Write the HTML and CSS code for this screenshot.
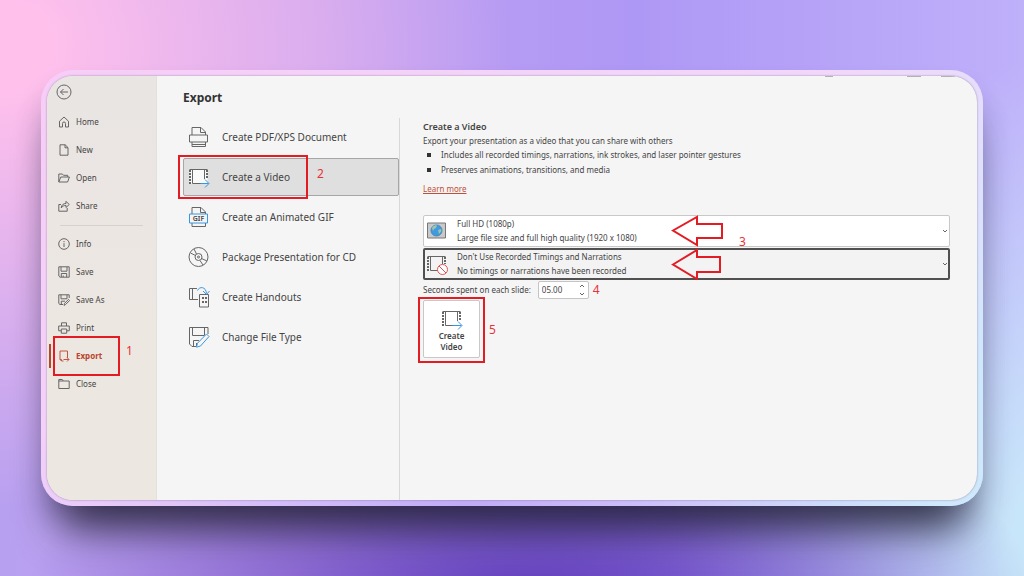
FILE: index.html
```html
<!DOCTYPE html>
<html lang="en">
<head>
  <meta charset="UTF-8" />
  <meta name="viewport" content="width=device-width, initial-scale=1" />
  <title>Export</title>
  <link rel="stylesheet" href="styles.css">
</head>
<body>
  <div class="frame">
    <div class="window">
      <aside class="sidebar">
        <button class="back" aria-label="Back">
          <svg viewBox="0 0 16 16"><circle cx="8" cy="8" r="7"/><path d="M12 8H4.500M7.500 5L4.500 8l3 3"/></svg>
        </button>
        <nav class="menu">
          <a href="#"><svg viewBox="0 0 12 12"><path d="M1.500 5.200L6 1l4.500 4.200V11H7.500V7.500a1.500 1.500 0 0 0-3 0V11h-3z"/></svg>Home</a>
          <a href="#"><svg viewBox="0 0 12 12"><path d="M2 .8h5.200L10 3.600v7.600H2zM7 .8v3h3"/></svg>New</a>
          <a href="#"><svg viewBox="0 0 12 12"><path d="M.8 10V2h3.500l1.200 1.300h4.200V5M.8 10L2.800 5h8.600L9.600 10z"/></svg>Open</a>
          <a href="#"><svg viewBox="0 0 12 12"><path d="M3 4.500H.8v6.700h8.400V8M3.200 8c.2-3 2-4.500 4.800-4.500V1.300l3.200 3.200L8 7.500V5.500C6 5.500 4.500 6 3.200 8z"/></svg>Share</a>
          <hr>
          <a href="#"><svg viewBox="0 0 12 12"><circle cx="6" cy="6" r="5.300"/><path d="M6 5.200V9M6 3v1.200"/></svg>Info</a>
          <a href="#"><svg viewBox="0 0 12 12"><path d="M.8.800h10.400v10.400H2L.8 10zM3 .8v4.400h6V.8M3.300 11V7.500h5.400V11M5.200 9.500V11"/></svg>Save</a>
          <a href="#"><svg viewBox="0 0 12 12"><path d="M5 10.500H2L.8 9.500V.800h10.400V4M3 .8v4h6V.8M3.300 10.300V7.200H7M6 11.400l.5-2 4-4 1.100 1.100-4 4z"/></svg>Save As</a>
          <a href="#"><svg viewBox="0 0 12 12"><path d="M3.500 4V.8h5V4M3 8.800H.7V4h10.600v4.800H9M3.300 7h5.400v4.200H3.300z"/></svg>Print</a>
          <a href="#" class="active">
            <svg viewBox="0 0 12 12"><path d="M5.500 11H3.500L2 9.500V1h7.500v7M3.500 11V9.500H2M5.500 9.500h5.500M9 7.500l2 2-2 2"/></svg>Export
            <span class="mark mark-export"></span>
            <span class="step step-1">1</span>
          </a>
          <a href="#"><svg viewBox="0 0 12 12"><path d="M.8 10.500V1.500h3.500L5.300 3h5.900v7.500zM.8 3h4.500"/></svg>Close</a>
        </nav>
      </aside>

      <main class="content">
        <div class="caption"><i></i><i></i><i></i></div>
        <h1>Export</h1>
        <div class="columns">
          <div class="types">
            <button class="type">
              <svg viewBox="0 0 22 22"><path d="M4 9V1.500h9L17.500 6v3M12.500 1.500v5h5M1.500 9h18v7h-18zM4 16v4.500h13.500V16M4 18.500h13.500"/></svg>
              Create PDF/XPS Document
            </button>
            <button class="type selected">
              <svg viewBox="0 0 22 22"><path class="white" d="M1.500 3.500h18v14h-18z"/><path d="M13 17.500H4.500v-14h12V13M1.500 3.500h18"/><path class="dots" d="M2 4v14M19 4v9"/><path class="blue" d="M12.500 17.500h8M17 13.500l4 4-4 4"/></svg>
              Create a Video
              <span class="mark mark-video"></span>
              <span class="step step-2">2</span>
            </button>
            <button class="type">
              <svg viewBox="0 0 22 22"><path d="M4 8V1.500h9L17.500 6v2M12.500 1.500v5h5M4 17v3.500h13.500V17"/><path class="blue" d="M1.500 8h18v9h-18z"/><text x="10.500" y="15">GIF</text></svg>
              Create an Animated GIF
            </button>
            <button class="type">
              <svg viewBox="0 0 22 22"><circle cx="10.500" cy="11" r="9.500"/><circle cx="10.500" cy="11" r="3.500"/><circle cx="10.500" cy="11" r="1"/><path d="M2.500 7l5 2.500M6 3l2.500 5M13.500 12.500l5.500 2.500M12 14.500l3 4.500"/></svg>
              Package Presentation for CD
            </button>
            <button class="type">
              <svg viewBox="0 0 22 22"><path d="M10 13.500H1.500V2.500H9M4.500 2.500v11M11.500 8.500h9v12.500h-9z"/><path class="dots" d="M14 12h5M14 16h5"/><path class="blue" d="M9.500 4.500c2-4.500 8.500-4 9 3M15 5l3.500 3.500L21.500 5"/></svg>
              Create Handouts
            </button>
            <button class="type">
              <svg viewBox="0 0 22 22"><path d="M8 20.500H4L1.500 18V1.500h18.500V8M4.500 1.500v8h12v-8M5.500 20v-5.500H11M8.500 17v3"/><path class="blue pencil" d="M8.500 21.200l1-4L18.500 8l2.500 2.500-8.500 9.500z"/></svg>
              Change File Type
            </button>
          </div>

          <section class="details">
            <h2>Create a Video</h2>
            <p>Export your presentation as a video that you can share with others</p>
            <ul>
              <li>Includes all recorded timings, narrations, ink strokes, and laser pointer gestures</li>
              <li>Preserves animations, transitions, and media</li>
            </ul>
            <a class="learn" href="#">Learn more</a>

            <div class="combos">
              <div class="combo">
                <select id="quality" aria-label="Video quality"><option>Full HD (1080p)</option></select>
                <svg class="combo-icon" viewBox="0 0 22 22"><path class="bezel" d="M1.500 3h18v15h-18z"/><circle class="globe" cx="10.500" cy="10.500" r="5.500"/><path class="land" d="M6 8c1-2 3-3 5-2.500L10 8l-2 1-1 2zM12 10l3-1 .5 2-2.500 3z"/></svg>
                <label for="quality">Large file size and full high quality (1920 x 1080)</label>
                <svg class="chevron" viewBox="0 0 6 6"><path d="M1 2l2 2 2-2"/></svg>
                <svg class="arrow" viewBox="0 0 52 32"><path d="M2 15.500L26 2v7h25v14H26v7z"/></svg>
              </div>
              <div class="combo focused">
                <select id="timings" aria-label="Timings and narrations"><option>Don't Use Recorded Timings and Narrations</option></select>
                <svg class="combo-icon" viewBox="0 0 22 22"><path d="M12 17.500H4.500v-14h12V11M1.500 3.500h18"/><path class="dots" d="M2 4v14M19 4v7"/><circle class="no" cx="16.500" cy="16.500" r="5"/><path class="no" d="M13 13l7 7"/></svg>
                <label for="timings">No timings or narrations have been recorded</label>
                <svg class="chevron" viewBox="0 0 6 6"><path d="M1 2l2 2 2-2"/></svg>
                <svg class="arrow" viewBox="0 0 52 32"><path d="M2 16.500L26 2v7h23v15H26v7z"/></svg>
              </div>
              <span class="step step-3">3</span>
            </div>

            <div class="seconds">
              <label for="secs">Seconds spent on each slide:</label>
              <span class="spinner">
                <input id="secs" type="text" value="05.00">
                <svg viewBox="0 0 6 14"><path d="M1 4l2-2 2 2M1 10l2 2 2-2"/></svg>
              </span>
              <span class="step">4</span>
            </div>

            <button class="create">
              <svg viewBox="0 0 22 22"><path d="M12 17.500H4.500v-14h12V13M1.500 3.500h18"/><path class="dots" d="M2 4v14M19 4v9"/><path class="blue" d="M11.500 17.500h9M17 13.500l4 4-4 4"/></svg>
              <span>Create<br>Video</span>
              <span class="mark mark-create"></span>
              <span class="step step-5">5</span>
            </button>
          </section>
        </div>
      </main>
    </div>
  </div>
</body>
</html>
```
FILE: styles.css
```css
* {
  box-sizing: border-box;
}

body {
  margin: 0;
  min-height: 100vh;
  padding: 70px 41px;
  display: flex;
  font-family: 'Noto Sans', 'Open Sans', sans-serif;
  font-size: 8px;
  line-height: 14px;
  color: #444;
  background:
    radial-gradient(ellipse 50% 45% at 52% 108%, #5a35b8, rgba(90, 53, 184, 0)),
    radial-gradient(ellipse 40% 90% at 106% 100%, #c8e6fa 20%, rgba(200, 230, 250, 0)),
    radial-gradient(ellipse 50% 80% at 0% 8%, #ffc0ec 10%, rgba(255, 192, 236, 0)),
    linear-gradient(to right, #b8a0f0, #c0a0f0 30%, #ae98f5 62%, #bfb0fa);
}

button,
input,
select {
  font: inherit;
  color: inherit;
}

svg {
  fill: none;
  stroke: #666;
  flex: none;
}

.frame {
  flex: 1;
  display: flex;
  padding: 6px;
  border-radius: 32px;
  background:
    radial-gradient(ellipse 50% 40% at 45% 100%, #c0acf6, rgba(192, 172, 246, 0)),
    linear-gradient(135deg, #f6cdf6, #f0d8fb 60%, #d0e8fb 90%);
  box-shadow: 0 42px 44px -20px rgba(30, 30, 45, 0.8), 0 20px 30px -6px rgba(20, 20, 60, 0.3);
}

.window {
  flex: 1;
  display: flex;
  overflow: hidden;
  border-radius: 26px;
  background: #f5f5f5;
  box-shadow: 0 0 2px rgba(60, 40, 90, 0.5);
}

/* Left menu */

.sidebar {
  width: 110px;
  flex: none;
  padding-top: 8px;
  background: linear-gradient(#e9e5e3, #ede7e2 60%);
  border-right: 1px solid #e6e0dd;
}

.back {
  display: block;
  width: 16px;
  height: 16px;
  margin: 0 0 8px 9px;
  padding: 0;
  border: none;
  background: none;
}

.back svg {
  display: block;
}

.menu a {
  position: relative;
  display: flex;
  align-items: center;
  gap: 6px;
  height: 28px;
  padding-left: 11px;
  color: #444;
  text-decoration: none;
}

.menu svg {
  width: 12px;
  height: 12px;
}

.menu hr {
  height: 1px;
  margin: 5px 13px 4px;
  border: none;
  background: #d6d1ce;
}

.menu .active {
  color: #b8452c;
  font-weight: 700;
}

.menu .active svg {
  stroke: #c4553c;
}

.menu .active::before {
  content: '';
  position: absolute;
  left: 2px;
  top: 2px;
  width: 2px;
  height: 24px;
  background: #b8452c;
}

/* Red marks and step numbers */

.mark {
  position: absolute;
  border: 2px solid #e31b23;
}

.step {
  color: #e8323a;
  font-size: 12px;
  font-weight: 400;
}

.step-1,
.step-2,
.step-3,
.step-5 {
  position: absolute;
}

.mark-export {
  left: 6px;
  top: -6px;
  width: 67px;
  height: 40px;
}

.step-1 {
  left: 79px;
  top: 2px;
}

.mark-video {
  left: -6px;
  top: -4px;
  width: 130px;
  height: 44px;
}

.step-2 {
  left: 133px;
  top: 8px;
}

.step-3 {
  left: 316px;
  top: 20px;
}

.mark-create {
  left: -6px;
  top: -4px;
  width: 67px;
  height: 66px;
}

.step-5 {
  left: 65px;
  top: 23px;
}

/* Export page */

.content {
  flex: 1;
  display: flex;
  flex-direction: column;
  position: relative;
  padding-left: 26px;
}

.caption {
  position: absolute;
  top: 0;
  right: 22px;
  display: flex;
  gap: 20px;
}

.caption i {
  width: 14px;
  height: 1px;
  background: #b5b0b8;
}

.caption i:first-child {
  width: 8px;
  margin-right: 54px;
}

h1 {
  margin: 14px 0 12px;
  font-size: 12px;
  line-height: 16px;
  font-weight: 700;
  color: #333;
}

.columns {
  flex: 1;
  display: flex;
}

.types {
  width: 217px;
  flex: none;
  border-right: 1px solid #d8d8d8;
}

.type {
  position: relative;
  display: flex;
  align-items: center;
  gap: 12px;
  width: 100%;
  height: 38px;
  margin-bottom: 2px;
  padding: 0 0 0 4px;
  border: 1px solid transparent;
  border-radius: 2px;
  background: none;
  font-size: 10px;
  text-align: left;
}

.type svg {
  width: 22px;
  height: 22px;
}

.type.selected {
  background: #dfdfdf;
  border-color: #a6a6a6;
}

.blue {
  stroke: #3a96dd;
}

.white {
  fill: #fafafa;
  stroke: none;
}

.pencil {
  fill: #f5f5f5;
}

.dots {
  stroke-width: 2;
  stroke-dasharray: 2 1;
}

.type text {
  fill: #444;
  stroke: none;
  font-size: 7px;
  font-weight: 600;
  text-anchor: middle;
}

.details {
  flex: 1;
  padding: 2px 27px 0 23px;
}

.details h2 {
  margin: 0;
  font-size: 9px;
  line-height: 14px;
  font-weight: 600;
}

.details p {
  margin: 0;
}

.details ul {
  margin: 0 0 5px;
  padding: 0;
  list-style: none;
}

.details li {
  display: flex;
  align-items: center;
  gap: 10px;
  padding-left: 4px;
  margin-bottom: 1px;
}

.details li::before {
  content: '';
  width: 4px;
  height: 4px;
  background: #333;
}

.learn {
  display: block;
  width: max-content;
  color: #c05038;
}

.combos {
  position: relative;
  display: grid;
  gap: 2px;
  margin-top: 19px;
}

/* the drop-down fills the box, its description lies on the second line */
.combo {
  display: grid;
  height: 31px;
}

.combo > * {
  grid-area: 1 / 1;
}

.combo select {
  appearance: none;
  width: 100%;
  padding: 0 20px 14px 33px;
  border: 1px solid #c8c8c8;
  border-radius: 2px;
  background: #fff;
}

.combo.focused select {
  border: 2px solid #505050;
  background: #f3f3f3;
  padding-left: 32px;
}

.combo label {
  place-self: end start;
  margin: 0 0 2px 34px;
}

.combo svg {
  align-self: center;
  pointer-events: none;
}

.combo-icon {
  width: 22px;
  height: 22px;
  margin-left: 3px;
}

.bezel {
  fill: #c9c9c9;
  stroke: #777;
}

.globe {
  fill: #3f9be0;
  stroke: #4a86b8;
}

.land {
  fill: #9fc4b0;
  stroke: none;
}

.no {
  fill: #fff;
  stroke: #e05050;
}

.chevron {
  width: 6px;
  height: 6px;
  justify-self: end;
  margin-right: 2px;
}

.arrow {
  width: 52px;
  height: 32px;
  margin-left: 248px;
}

.arrow path {
  stroke: #e31b23;
  stroke-width: 2;
}

.seconds {
  display: flex;
  align-items: center;
  gap: 4px;
  height: 18px;
  margin: 2px 0 1px;
}

.spinner {
  display: flex;
  align-items: center;
  width: 51px;
  height: 18px;
  margin-left: 3px;
  padding-right: 3px;
  border: 1px solid #c4c4c4;
  border-radius: 2px;
  background: #fff;
}

.spinner input {
  flex: 1;
  min-width: 0;
  padding: 0 0 0 3px;
  border: none;
  background: none;
}

.spinner svg {
  width: 6px;
  height: 14px;
}

.create {
  position: relative;
  display: flex;
  flex-direction: column;
  align-items: center;
  width: 57px;
  height: 58px;
  padding: 7px 0 0;
  border: 1px solid #c8c8c8;
  border-radius: 2px;
  background: #fff;
  font-weight: 600;
  line-height: 11px;
}

.create svg {
  width: 22px;
  height: 22px;
}
```
